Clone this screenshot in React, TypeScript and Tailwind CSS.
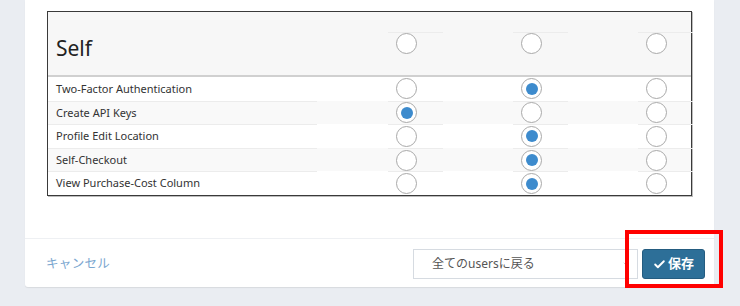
import { Check, ChevronDown } from "lucide-react"

const rows = [
  { label: "Two-Factor Authentication", value: 1 },
  { label: "Create API Keys", value: 0 },
  { label: "Profile Edit Location", value: 1 },
  { label: "Self-Checkout", value: 1 },
  { label: "View Purchase-Cost Column", value: 1 },
]

function Radio({ checked }: { checked?: boolean }) {
  return (
    <div className="w-[21px] h-[21px] rounded-full border-[1.5px] border-[#a9a9a9] bg-white flex items-center justify-center">
      {checked && <div className="w-[12px] h-[12px] rounded-full bg-[#3d8bcd]" />}
    </div>
  )
}

export default function App() {
  return (
    <div className="w-[740px] h-[306px] bg-[#eaedf2] font-['Noto_Sans','Noto_Sans_CJK_JP',sans-serif] overflow-hidden">
      <div className="ml-[25px] w-[689px] h-[287px] bg-white rounded-b-[3px] shadow-[0_1px_1px_rgba(0,0,0,0.08)] flex flex-col">
        {/* Permission table */}
        <div className="pt-[11px] px-[22px] h-[238px]">
          <div className="border border-[#3a3a3a] shadow-[1px_1px_0_#bdbdbd]">
            <div className="h-[65px] bg-[#f7f7f7] border-b-2 border-[#d0d0d0] grid grid-cols-[269px_71px_125px_125px_55px]">
              <div className="pl-[8px] text-[21px] text-[#222] leading-none pt-[26px]">Self</div>
              <div />
              {[0, 1, 2].map((c) => (
                <div key={c} className="pt-[20px]">
                  <div className="border-t border-[#ececec] w-[55px] pl-[8px]">
                    <Radio />
                  </div>
                </div>
              ))}
            </div>
            {rows.map((r, i) => (
              <div
                key={r.label}
                className={`h-[23.6px] grid grid-cols-[269px_71px_125px_125px_55px] items-center ${i % 2 === 1 ? "bg-[#f9f9f9]" : "bg-white"}`}
              >
                <div className={`h-full flex items-center pl-[8px] text-[11px] text-[#333] ${i > 0 ? "border-t border-[#ececec]" : ""}`}>
                  {r.label}
                </div>
                <div />
                {[0, 1, 2].map((c) => (
                  <div key={c} className={`h-full flex items-center pl-[8px] w-[55px] ${i > 0 ? "border-t border-[#ececec]" : ""}`}>
                    <Radio checked={r.value === c} />
                  </div>
                ))}
              </div>
            ))}
          </div>
        </div>

        {/* Footer */}
        <div className="border-t border-[#eef0f3] flex items-start justify-between pl-[21px] pr-[9px] pt-[10px]">
          <span className="text-[12.5px] text-[#7aa6cf] mt-[6px] tracking-wide">キャンセル</span>
          <div className="flex items-center gap-[4px]">
            <div className="w-[225px] h-[30px] border border-[#d6dbe1] bg-white flex items-center justify-between pl-[18px] pr-[7px]">
              <span className="text-[12px] text-[#555]">全てのusersに戻る</span>
              <ChevronDown className="w-[8px] h-[8px] text-[#ccc]" strokeWidth={3} />
            </div>
            <div className="relative">
              <button className="w-[63px] h-[30px] rounded-[3px] bg-[#2d6f98] border border-[#245c80] text-white text-[13px] font-semibold flex items-center justify-center gap-[2px]">
                <Check className="w-[13px] h-[13px]" strokeWidth={3.5} />
                保存
              </button>
              <div className="absolute -left-[17px] -top-[19px] w-[98px] h-[58px] border-4 border-[#ff0000]" />
            </div>
          </div>
        </div>
      </div>
    </div>
  )
}
